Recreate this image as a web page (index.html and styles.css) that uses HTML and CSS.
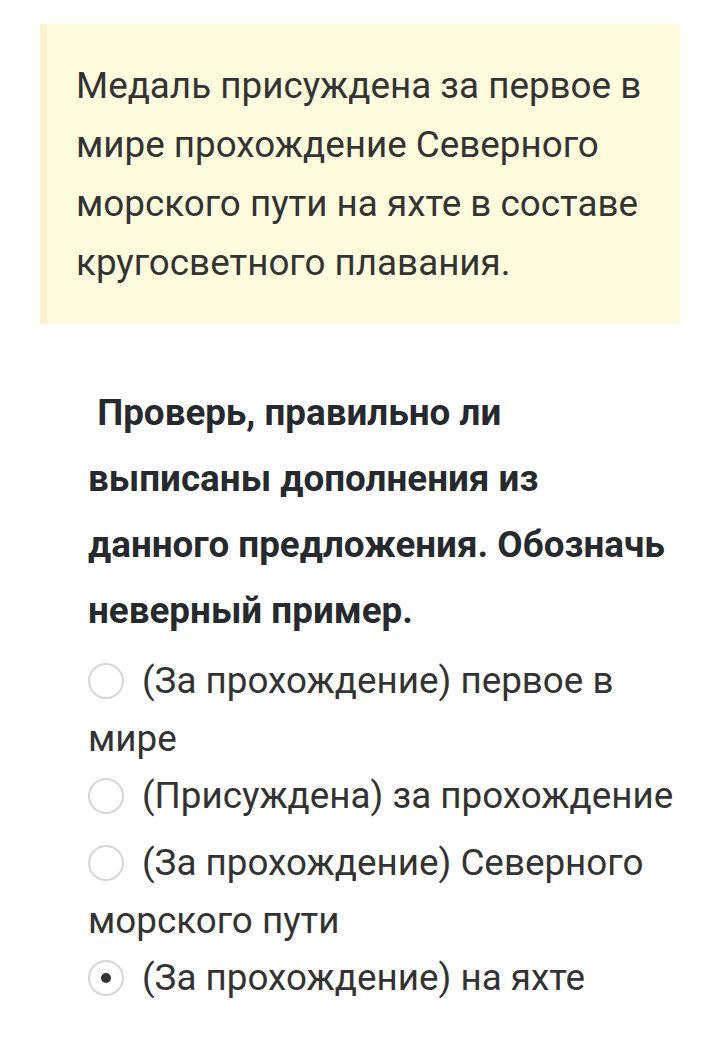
FILE: index.html
```html
<!DOCTYPE html>
<html lang="ru">
<head>
<meta charset="utf-8">
<link rel="stylesheet" href="styles.css">
</head>
<body>
<div class="note">
  <p>Медаль присуждена за первое в мире прохождение Северного морского пути на яхте в составе кругосветного плавания.</p>
</div>
<div class="task">
  <p class="question">&nbsp;Проверь, правильно ли выписаны дополнения из данного предложения. Обозначь неверный пример.</p>
  <ul class="options">
    <li class="option"><span class="radio"></span>(За прохождение) первое в мире</li>
    <li class="option"><span class="radio"></span>(Присуждена) за прохождение</li>
    <li class="option"><span class="radio"></span>(За прохождение) Северного морского пути</li>
    <li class="option"><span class="radio checked"></span>(За прохождение) на яхте</li>
  </ul>
</div>
</body>
</html>
```

FILE: styles.css
```css
html, body {
  margin: 0;
  padding: 0;
  background: #ffffff;
}

body {
  font-family: Roboto, "Noto Sans", sans-serif;
  color: #333333;
}

.note {
  margin: 24px 40px 0 40px;
  background: #fffbdc;
  border-left: 7px solid #f8f1cc;
  padding: 32px 10px 32px 29px;
}

.note p {
  margin: 0;
  font-size: 36.8px;
  line-height: 59px;
}

.task {
  padding: 56px 46px 0 88px;
}

.question {
  margin: 0 0 8px 0;
  font-family: Roboto, "Noto Sans", sans-serif;
  font-weight: bold;
  font-size: 36.8px;
  line-height: 66px;
  color: #262a2e;
}

.options {
  list-style: none;
  margin: 0;
  padding: 0;
}

.option {
  font-size: 36.8px;
  line-height: 57.5px;
  min-height: 67px;
}

.radio {
  display: inline-block;
  box-sizing: border-box;
  width: 36px;
  height: 36px;
  border: 2px solid #d6d6d6;
  border-radius: 50%;
  vertical-align: -6px;
  margin-right: 18px;
  position: relative;
}

.radio.checked::after {
  content: "";
  position: absolute;
  left: 50%;
  top: 50%;
  width: 10px;
  height: 10px;
  margin: -5px 0 0 -5px;
  border-radius: 50%;
  background: #333333;
}
```
